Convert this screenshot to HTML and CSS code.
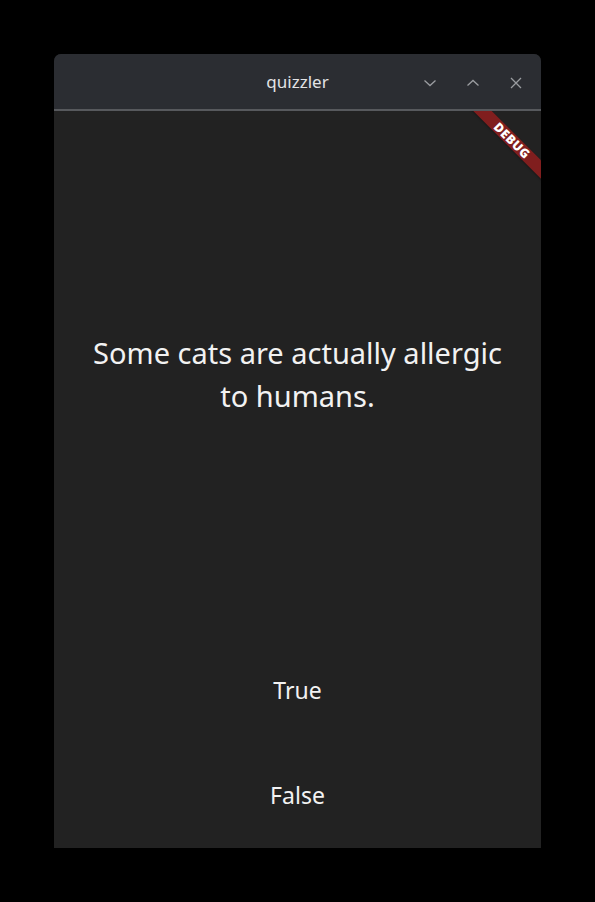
FILE: index.html
```html
<!DOCTYPE html>
<html>
<head>
<meta charset="utf-8">
<link rel="stylesheet" href="styles.css">
</head>
<body>
<div class="window">
  <div class="titlebar">
    <span class="title">quizzler</span>
    <div class="controls">
      <svg class="ctl" width="16" height="16" viewBox="0 0 16 16"><path d="M2.5 5.5 L8 10.5 L13.5 5.5" fill="none" stroke="#9a9ca0" stroke-width="1.3"/></svg>
      <svg class="ctl" width="16" height="16" viewBox="0 0 16 16"><path d="M2.5 10.5 L8 5.5 L13.5 10.5" fill="none" stroke="#9a9ca0" stroke-width="1.3"/></svg>
      <svg class="ctl" width="16" height="16" viewBox="0 0 16 16"><path d="M3 3 L13 13 M13 3 L3 13" fill="none" stroke="#9a9ca0" stroke-width="1.3"/></svg>
    </div>
  </div>
  <div class="content">
    <div class="question"><p>Some cats are actually allergic to humans.</p></div>
    <div class="answer">True</div>
    <div class="answer">False</div>
    <div class="banner">DEBUG</div>
  </div>
</div>
</body>
</html>
```
FILE: styles.css
```css
html, body {
  margin: 0;
  padding: 0;
}
body {
  background: #000;
  width: 595px;
  height: 902px;
  box-sizing: border-box;
  padding: 54px;
  font-family: "Noto Sans", "Open Sans", sans-serif;
}
.window {
  width: 487px;
  height: 794px;
  display: flex;
  flex-direction: column;
  border-radius: 7px 7px 0 0;
  overflow: hidden;
  background: #222222;
}
.titlebar {
  height: 55px;
  flex: none;
  background: #2b2d32;
  border-bottom: 2px solid #57595d;
  display: flex;
  align-items: center;
  justify-content: center;
  position: relative;
}
.title {
  color: #e2e3e5;
  font-size: 17px;
  margin-top: -1px;
}
.controls {
  position: absolute;
  right: 17px;
  top: 21px;
  display: flex;
  gap: 27px;
}
.ctl {
  display: block;
}
.content {
  flex: 1;
  display: flex;
  flex-direction: column;
  position: relative;
  overflow: hidden;
}
.question {
  flex: 5;
  display: flex;
  align-items: center;
  justify-content: center;
  padding: 0 30px;
}
.question p {
  margin: 0;
  color: #f2f2f2;
  font-size: 29px;
  line-height: 43px;
  text-align: center;
}
.answer {
  flex: 1;
  display: flex;
  align-items: center;
  justify-content: center;
  color: #f2f2f2;
  font-size: 23px;
}
.banner {
  position: absolute;
  width: 120px;
  height: 13px;
  left: 397.75px;
  top: 22.75px;
  transform: rotate(45deg);
  background: #801e1e;
  color: #fff;
  font-size: 12.5px;
  font-weight: 900;
  line-height: 13px;
  text-align: center;
  letter-spacing: 0.4px;
  box-shadow: 0 1px 2px rgba(0,0,0,0.3);
}
```
